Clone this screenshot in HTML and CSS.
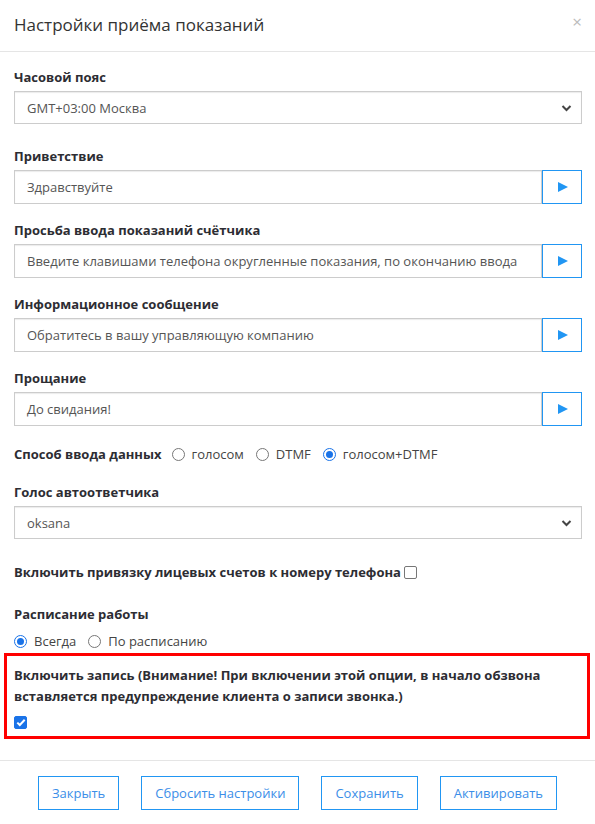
FILE: index.html
```html
<!DOCTYPE html>
<html lang="ru">
<head>
<meta charset="utf-8">
<title>Настройки приёма показаний</title>
<link rel="stylesheet" href="styles.css">
</head>
<body>
<div class="modal">
  <div class="modal-header">
    <h4 class="modal-title">Настройки приёма показаний</h4>
    <span class="close">×</span>
  </div>
  <div class="modal-body">
    <div class="group g-select">
      <label class="lbl">Часовой пояс</label>
      <div class="select"><span>GMT+03:00 Москва</span>
        <svg class="chev" width="11" height="8" viewBox="0 0 11 8"><path d="M1.5 2 L5.5 6 L9.5 2" fill="none" stroke="#444" stroke-width="2"/></svg>
      </div>
    </div>
    <div class="group">
      <label class="lbl">Приветствие</label>
      <div class="input-group">
        <div class="input">Здравствуйте</div>
        <div class="play"><svg width="12" height="12" viewBox="0 0 12 12"><path d="M1 1 L11 6 L1 11 Z" fill="#2196f3"/></svg></div>
      </div>
    </div>
    <div class="group">
      <label class="lbl">Просьба ввода показаний счётчика</label>
      <div class="input-group">
        <div class="input">Введите клавишами телефона округленные показания, по окончанию ввода</div>
        <div class="play"><svg width="12" height="12" viewBox="0 0 12 12"><path d="M1 1 L11 6 L1 11 Z" fill="#2196f3"/></svg></div>
      </div>
    </div>
    <div class="group">
      <label class="lbl">Информационное сообщение</label>
      <div class="input-group">
        <div class="input">Обратитесь в вашу управляющую компанию</div>
        <div class="play"><svg width="12" height="12" viewBox="0 0 12 12"><path d="M1 1 L11 6 L1 11 Z" fill="#2196f3"/></svg></div>
      </div>
    </div>
    <div class="group">
      <label class="lbl">Прощание</label>
      <div class="input-group">
        <div class="input">До свидания!</div>
        <div class="play"><svg width="12" height="12" viewBox="0 0 12 12"><path d="M1 1 L11 6 L1 11 Z" fill="#2196f3"/></svg></div>
      </div>
    </div>
    <div class="group inline-row">
      <span class="lbl">Способ ввода данных</span>
      <span class="radio"><span class="rb"></span>голосом</span>
      <span class="radio"><span class="rb"></span>DTMF</span>
      <span class="radio"><span class="rb on"></span>голосом+DTMF</span>
    </div>
    <div class="group g-select2">
      <label class="lbl">Голос автоответчика</label>
      <div class="select"><span>oksana</span>
        <svg class="chev" width="11" height="8" viewBox="0 0 11 8"><path d="M1.5 2 L5.5 6 L9.5 2" fill="none" stroke="#444" stroke-width="2"/></svg>
      </div>
    </div>
    <div class="group g-bind">
      <span class="lbl">Включить привязку лицевых счетов к номеру телефона</span>
      <span class="cb"></span>
    </div>
    <div class="group g-sched">
      <label class="lbl">Расписание работы</label>
      <div class="radios">
        <span class="radio"><span class="rb on"></span>Всегда</span>
        <span class="radio"><span class="rb"></span>По расписанию</span>
      </div>
    </div>
  </div>
  <div class="record">
    <div class="lbl rec-text">Включить запись (Внимание! При включении этой опции, в начало обзвона вставляется предупреждение клиента о записи звонка.)</div>
    <span class="cb checked"><svg width="10" height="9" viewBox="0 0 10 9"><path d="M1.3 4.6 L3.8 7 L8.7 1.8" fill="none" stroke="#fff" stroke-width="2"/></svg></span>
  </div>
  <div class="modal-footer">
    <button class="btn">Закрыть</button>
    <button class="btn">Сбросить настройки</button>
    <button class="btn">Сохранить</button>
    <button class="btn">Активировать</button>
  </div>
</div>
</body>
</html>
```
FILE: styles.css
```css
* { box-sizing: border-box; }
html, body { margin: 0; padding: 0; background: #fff; }
body {
  font-family: "Open Sans", "Noto Sans", sans-serif;
  color: #333;
  font-size: 13px;
  width: 595px;
  height: 824px;
  overflow: hidden;
}
.modal { width: 595px; }
.modal-header {
  height: 52px;
  border-bottom: 1px solid #e5e5e5;
  display: flex;
  align-items: center;
  justify-content: space-between;
  padding: 0 14px 2px 14px;
}
.modal-title {
  margin: 0;
  font-weight: 400;
  font-size: 17px;
  color: #333;
}
.close {
  color: #bbb;
  font-size: 17px;
  line-height: 1;
  margin-top: -6px;
  margin-right: -1px;
}
.modal-body { padding: 16px 13px 0 14px; }
.group { margin-bottom: 17px; }
.g-select { margin-bottom: 23px; }
.lbl {
  display: block;
  font-weight: 700;
  font-size: 13px;
  line-height: 18px;
  margin-bottom: 5px;
  color: #2d2d33;
}
.select, .input {
  height: 34px;
  border: 1px solid #ccc;
  box-shadow: inset 0 1px 1px rgba(0,0,0,0.08);
  display: flex;
  align-items: center;
  padding: 0 12px;
  color: #555;
  font-size: 13px;
  white-space: nowrap;
  overflow: hidden;
}
.select { justify-content: space-between; height: 33px; padding-right: 9px; }
.input-group { display: flex; }
.input { flex: 1; min-width: 0; }
.play {
  width: 40px;
  height: 34px;
  border: 1px solid #2196f3;
  display: flex;
  align-items: center;
  justify-content: center;
  flex: none;
}
.play svg { margin-left: 2px; }
.inline-row { display: flex; align-items: center; margin-bottom: 20px; padding-top: 2px; }
.inline-row .lbl { display: inline; margin: 0 10px 0 0; }
.radio {
  display: inline-flex;
  align-items: center;
  color: #444;
  font-size: 13px;
  margin-right: 12px;
}
.rb {
  width: 13px;
  height: 13px;
  border: 1px solid #777;
  border-radius: 50%;
  margin-right: 7px;
  display: inline-block;
  position: relative;
}
.rb.on { border: 1px solid #1a73e8; background: #fff; }
.rb.on::after {
  content: "";
  position: absolute;
  left: 2px; top: 2px;
  width: 7px; height: 7px;
  border-radius: 50%;
  background: #1a73e8;
}
.g-select2 { margin-bottom: 24px; }
.g-bind { display: flex; align-items: center; margin-bottom: 24px; }
.g-bind .lbl { display: inline; margin: 0 3px 0 0; }
.cb {
  width: 13px;
  height: 13px;
  border: 1px solid #777;
  border-radius: 2px;
  display: inline-flex;
  align-items: center;
  justify-content: center;
}
.cb.checked { background: #1a73e8; border-color: #1a73e8; }
.g-sched { margin-bottom: 0; }
.g-sched .lbl { margin-bottom: 9px; }
.radios { display: flex; }
.record {
  margin: 3px 5px 0 4px;
  border: 3px solid #f00;
  padding: 9px 7px 10px 7px;
  height: 86px;
}
.rec-text { line-height: 21px; margin-bottom: 6px; }
.modal-footer {
  margin-top: 21px;
  border-top: 1px solid #e5e5e5;
  padding-top: 15px;
  display: flex;
  justify-content: center;
  gap: 22px;
}
.btn {
  font-family: inherit;
  background: #fff;
  border: 1px solid #2196f3;
  color: #3b8ee8;
  font-size: 13px;
  height: 34px;
  padding: 0 13px;
  border-radius: 0;
}
```
